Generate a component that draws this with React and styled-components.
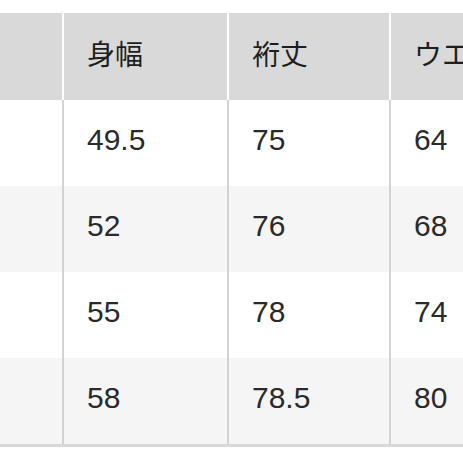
import React from "react";
import styled, { createGlobalStyle } from "styled-components";

const Global = createGlobalStyle`
  html, body { margin: 0; padding: 0; background: #ffffff; overflow: hidden; }
  body { font-family: "Liberation Sans", "Noto Sans CJK JP", sans-serif; }
`;

const Page = styled.div`
  width: 463px;
  height: 463px;
  overflow: hidden;
  padding-top: 13px;
  box-sizing: border-box;
`;

const Table = styled.div`
  display: flex;
  flex-direction: column;
  width: 600px;
  border-bottom: 3px solid #d8d8d8;
`;

const Row = styled.div`
  display: grid;
  grid-template-columns: 62px 165px 162px 170px;
  height: ${(p) => (p.$head ? 87 : 86)}px;
  background: ${(p) => (p.$head ? "#d9d9d9" : p.$alt ? "#f5f5f5" : "#ffffff")};
`;

const Cell = styled.div`
  display: flex;
  align-items: center;
  box-sizing: border-box;
  padding-left: 23px;
  padding-bottom: ${(p) => (p.$head ? 8 : 6)}px;
  border-left: ${(p) => (p.$first ? "none" : `2px solid ${p.$head ? "#ffffff" : "#d3d3d3"}`)};
  color: ${(p) => (p.$head ? "#1e1e1e" : "#2a2a2a")};
  font-family: ${(p) =>
    p.$head
      ? `"Noto Sans CJK JP", "Liberation Sans", sans-serif`
      : `"Liberation Sans", "Noto Sans CJK JP", sans-serif`};
  font-size: ${(p) => (p.$head ? 28 : 30)}px;
  white-space: nowrap;
`;

const headers = ["", "身幅", "裄丈", "ウエスト"];
const rows = [
  ["", "49.5", "75", "64"],
  ["", "52", "76", "68"],
  ["", "55", "78", "74"],
  ["", "58", "78.5", "80"],
];

export default function App() {
  return (
    <>
      <Global />
      <Page>
        <Table>
          <Row $head>
            {headers.map((h, i) => (
              <Cell key={i} $head $first={i === 0}>
                {h}
              </Cell>
            ))}
          </Row>
          {rows.map((r, ri) => (
            <Row key={ri} $alt={ri % 2 === 1}>
              {r.map((c, ci) => (
                <Cell key={ci} $first={ci === 0}>
                  {c}
                </Cell>
              ))}
            </Row>
          ))}
        </Table>
      </Page>
    </>
  );
}
